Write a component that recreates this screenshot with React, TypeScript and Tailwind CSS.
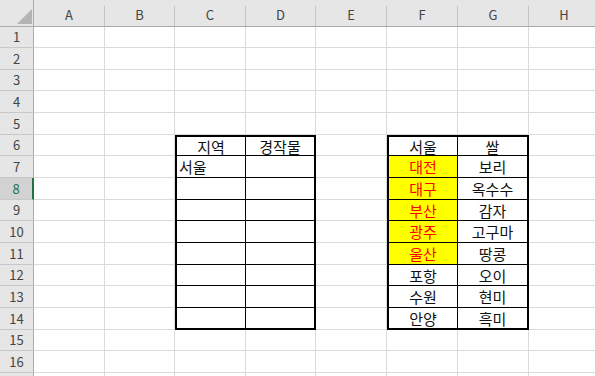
import clsx from "clsx";

const cols = ["A", "B", "C", "D", "E", "F", "G", "H"];
const rows = Array.from({ length: 17 }, (_, i) => i + 1);

type Cell = { v: string; hl?: boolean; left?: boolean };

const data: Record<string, Cell> = {
  C6: { v: "지역" },
  D6: { v: "경작물" },
  C7: { v: "서울", left: true },
  F6: { v: "서울" },
  G6: { v: "쌀" },
  F7: { v: "대전", hl: true },
  G7: { v: "보리" },
  F8: { v: "대구", hl: true },
  G8: { v: "옥수수" },
  F9: { v: "부산", hl: true },
  G9: { v: "감자" },
  F10: { v: "광주", hl: true },
  G10: { v: "고구마" },
  F11: { v: "울산", hl: true },
  G11: { v: "땅콩" },
  F12: { v: "포항" },
  G12: { v: "오이" },
  F13: { v: "수원" },
  G13: { v: "현미" },
  F14: { v: "안양" },
  G14: { v: "흑미" },
};

const tableCols = ["C", "D", "F", "G"];

function DataCell({ col, row }: { col: string; row: number }) {
  const cell = data[col + row];
  const inTable = tableCols.includes(col) && row >= 6 && row <= 14;
  const isLeft = col === "C" || col === "F";
  return (
    <div
      className={clsx(
        "flex items-center overflow-hidden whitespace-nowrap text-[15px] leading-none",
        inTable ? "border-black" : "border-[#dadada]",
        inTable && isLeft && "border-l-2",
        inTable && !isLeft ? "border-r-2" : "border-r",
        inTable && row === 6 && "border-t-2",
        inTable && row === 14 ? "border-b-2" : "border-b",
        cell?.hl ? "bg-[#ffff00] text-[#ff0000]" : "bg-white text-[#111]",
        cell?.left ? "justify-start pl-[2px]" : "justify-center"
      )}
    >
      {cell?.v}
    </div>
  );
}

export default function App() {
  return (
    <div className="w-[595px] h-[376px] overflow-hidden bg-white font-['Noto_Sans_CJK_KR','Noto_Sans',sans-serif]">
      <div className="grid grid-cols-[34px_71px_70px_71px_70px_71px_71px_71px_71px] grid-rows-[27px_21px_22px_21px_22px_22px_21px_22px_22px_21px_22px_22px_21px_22px_22px_21px_22px_22px]">
        {/* corner */}
        <div className="flex items-end justify-end bg-[#e6e6e6] border-r border-b border-[#ababab] pr-[1px] pb-[2px]">
          <svg width="15" height="15" viewBox="0 0 15 15">
            <polygon points="0,15 15,15 15,0" fill="#b4b4b4" />
          </svg>
        </div>
        {cols.map(c => (
          <div key={c} className="bg-[#e6e6e6] border-b border-[#ababab] pt-[6px]">
            <div className="h-full flex items-center justify-center pb-[3px] border-r border-[#c4c4c4] text-[13px] text-[#444]">
              {c}
            </div>
          </div>
        ))}
        {rows.map(r => (
          <>
            <div
              key={"h" + r}
              className={clsx(
                "flex items-center justify-center border-b border-[#c8c8c8] text-[13px]",
                r === 8
                  ? "bg-[#d2d2d2] text-[#217346] border-r-2 border-r-[#217346]"
                  : "bg-[#e6e6e6] text-[#444] border-r border-r-[#ababab]"
              )}
            >
              {r < 17 ? r : ""}
            </div>
            {cols.map(c => (
              <DataCell key={c + r} col={c} row={r} />
            ))}
          </>
        ))}
      </div>
    </div>
  );
}
